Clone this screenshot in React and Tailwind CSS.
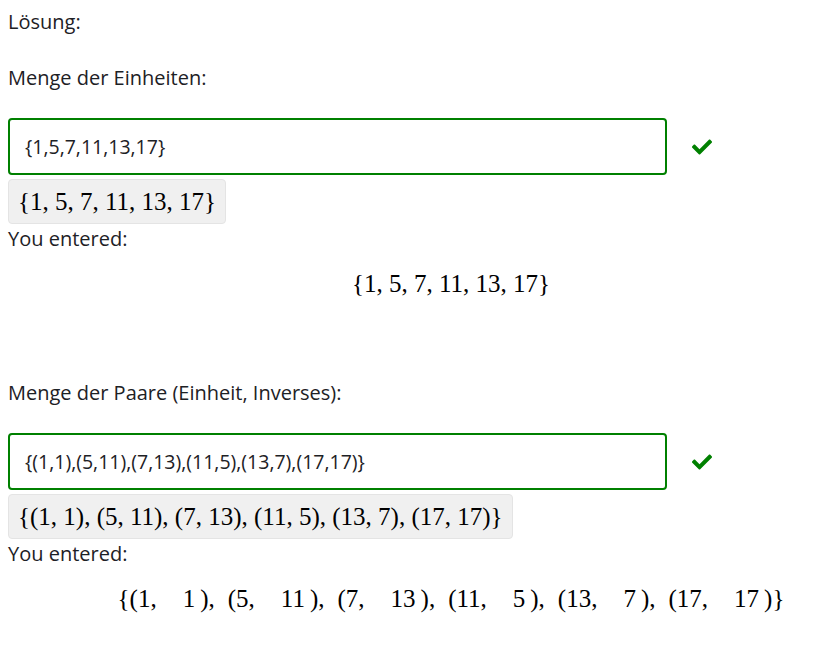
import React from "react";
import { FaCheck } from "react-icons/fa";

const math = { fontFamily: '"Liberation Serif", "DejaVu Serif", serif' };

function Block({ label, value, preview, display }) {
  return (
    <div>
      <div className="h-[30px] leading-[30px]">{label}</div>
      <div className="mt-[25px] flex items-center">
        <div className="w-[659px] h-[57px] border-2 border-[#008000] rounded-[4px] flex items-center pl-[15px] text-[19.5px] text-[#1d2125]">
          {value}
        </div>
        <FaCheck className="ml-[25px] text-[#008000] w-[20px] h-[20px]" />
      </div>
      <div
        className="mt-[4px] h-[45px] inline-flex items-center px-[9px] bg-[#f0f0f0] border border-[#e4e4e4] rounded-[4px] text-[25px] leading-none text-black"
        style={math}
      >
        {preview}
      </div>
      <div className="h-[30px] leading-[30px]">You entered:</div>
      <div className="pl-[72px] text-center text-[25px] leading-[25px] text-black mt-[17px]" style={math}>
        {display}
      </div>
    </div>
  );
}

function Pair({ a, b, last }) {
  return (
    <>
      <span>(</span>
      <span>{a},</span>
      <span className="inline-block w-[26px]" />
      <span>{b}</span>
      <span className="inline-block w-[5px]" />
      <span>)</span>
      {!last && (
        <>
          <span>,</span>
          <span className="inline-block w-[13px]" />
        </>
      )}
    </>
  );
}

export default function App() {
  const pairs = [
    ["1", "1"],
    ["5", "11"],
    ["7", "13"],
    ["11", "5"],
    ["13", "7"],
    ["17", "17"],
  ];
  return (
    <div
      className="w-[830px] h-[648px] bg-white text-[20px] text-[#1d2125] px-[8px] pt-[7px] overflow-hidden"
      style={{ fontFamily: '"Open Sans", sans-serif' }}
    >
      <div className="h-[30px] leading-[30px]">Lösung:</div>
      <div className="mt-[26px]">
        <Block
          label="Menge der Einheiten:"
          value="{1,5,7,11,13,17}"
          preview="{1, 5, 7, 11, 13, 17}"
          display="{1, 5, 7, 11, 13, 17}"
        />
      </div>
      <div className="mt-[82px]">
        <Block
          label="Menge der Paare (Einheit, Inverses):"
          value="{(1,1),(5,11),(7,13),(11,5),(13,7),(17,17)}"
          preview="{(1, 1), (5, 11), (7, 13), (11, 5), (13, 7), (17, 17)}"
          display={
            <span className="whitespace-nowrap">
              <span>{"{"}</span>
              {pairs.map(([a, b], i) => (
                <Pair key={i} a={a} b={b} last={i === pairs.length - 1} />
              ))}
              <span>{"}"}</span>
            </span>
          }
        />
      </div>
    </div>
  );
}
